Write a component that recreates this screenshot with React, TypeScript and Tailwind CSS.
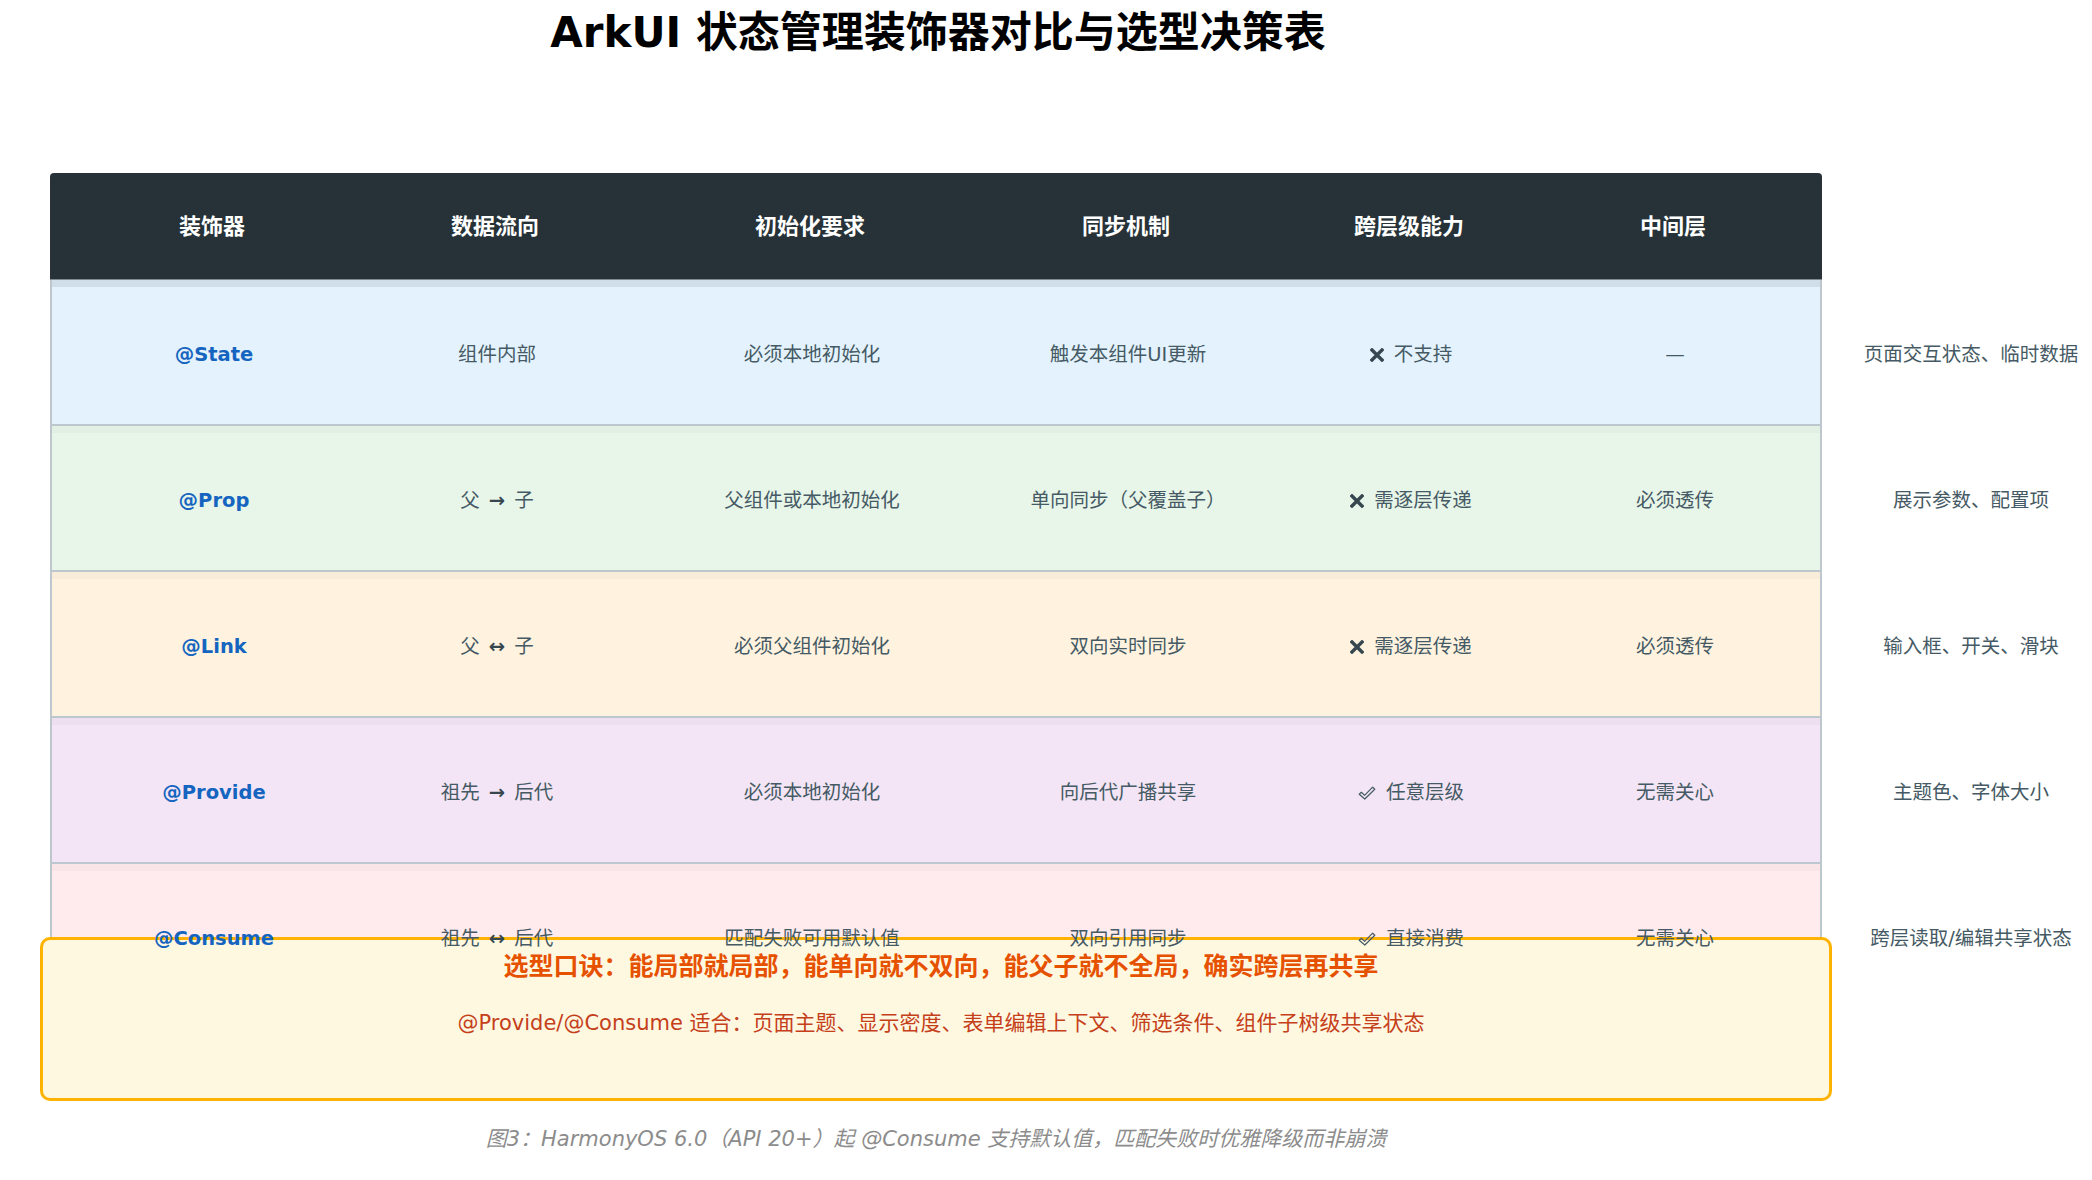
const cols = 'grid grid-cols-[324px_242px_388px_244px_322px_206px_46px_294px]'

const XMark = () => (
  <svg width="14" height="14" viewBox="0 0 14 14" className="shrink-0">
    <path d="M2 2 L12 12 M12 2 L2 12" stroke="#37474f" strokeWidth="3.4" strokeLinecap="square" />
  </svg>
)

const CheckMark = () => (
  <svg width="18" height="14" viewBox="0 0 18 14" className="shrink-0">
    <path
      d="M1.2 8.2 L3.4 6.3 L6.6 9.4 L14.6 1.2 L16.8 3.2 L6.8 13 Z"
      fill="none"
      stroke="#455a64"
      strokeWidth="1.2"
      strokeLinejoin="round"
    />
  </svg>
)

type Row = {
  name: string
  flow: string
  arrow?: string
  flowEnd?: string
  init: string
  sync: string
  ok: boolean
  reach: string
  middle: string
  use: string
  bg: string
  band: string
}

const rows: Row[] = [
  {
    name: '@State',
    flow: '组件内部',
    init: '必须本地初始化',
    sync: '触发本组件UI更新',
    ok: false,
    reach: '不支持',
    middle: '—',
    use: '页面交互状态、临时数据',
    bg: 'bg-[#e3f2fd]',
    band: 'shadow-[inset_0_7px_0_rgba(38,50,56,0.1)]',
  },
  {
    name: '@Prop',
    flow: '父',
    arrow: '→',
    flowEnd: '子',
    init: '父组件或本地初始化',
    sync: '单向同步（父覆盖子）',
    ok: false,
    reach: '需逐层传递',
    middle: '必须透传',
    use: '展示参数、配置项',
    bg: 'bg-[#e8f5e9]',
    band: 'shadow-[inset_0_7px_0_rgba(0,0,0,0.025)]',
  },
  {
    name: '@Link',
    flow: '父',
    arrow: '↔',
    flowEnd: '子',
    init: '必须父组件初始化',
    sync: '双向实时同步',
    ok: false,
    reach: '需逐层传递',
    middle: '必须透传',
    use: '输入框、开关、滑块',
    bg: 'bg-[#fff3e0]',
    band: 'shadow-[inset_0_7px_0_rgba(0,0,0,0.025)]',
  },
  {
    name: '@Provide',
    flow: '祖先',
    arrow: '→',
    flowEnd: '后代',
    init: '必须本地初始化',
    sync: '向后代广播共享',
    ok: true,
    reach: '任意层级',
    middle: '无需关心',
    use: '主题色、字体大小',
    bg: 'bg-[#f3e5f5]',
    band: 'shadow-[inset_0_7px_0_rgba(0,0,0,0.025)]',
  },
  {
    name: '@Consume',
    flow: '祖先',
    arrow: '↔',
    flowEnd: '后代',
    init: '匹配失败可用默认值',
    sync: '双向引用同步',
    ok: true,
    reach: '直接消费',
    middle: '无需关心',
    use: '跨层读取/编辑共享状态',
    bg: 'bg-[#ffebee]',
    band: 'shadow-[inset_0_7px_0_rgba(0,0,0,0.025)]',
  },
]

const headers = ['装饰器', '数据流向', '初始化要求', '同步机制', '跨层级能力', '中间层']

export default function App() {
  return (
    <div className="w-[2092px] h-[1180px] overflow-hidden bg-white font-['DejaVu_Sans','Noto_Sans_CJK_SC',sans-serif]">
      <h1 className="w-[1876px] pt-[8px] text-center text-[42px] leading-[50px] font-bold text-black">
        ArkUI 状态管理装饰器对比与选型决策表
      </h1>

      <div className="mt-[115px] ml-[50px]">
        <div className={`${cols} w-[1772px] h-[107px] items-center rounded-t-[4px] bg-[#263238] border-b border-[#7d8a92] text-white text-[22px] font-bold`}>
          {headers.map(h => (
            <div key={h} className="text-center">{h}</div>
          ))}
        </div>

        {/* rows: the last track sits outside the table background */}
        {rows.map(r => (
          <div
            key={r.name}
            className={`${cols} ${r.bg} ${r.band} w-[1772px] h-[146px] pt-[6px] items-center border-x-2 border-b-2 border-[#bcc7ce] text-[19.5px] text-[#455a64]`}
          >
            <div className="text-center font-bold text-[#1565c0]">{r.name}</div>
            <div className="flex items-center justify-center gap-[9px]">
              <span>{r.flow}</span>
              {r.arrow && <span className="font-bold text-[#37474f]">{r.arrow}</span>}
              {r.flowEnd && <span>{r.flowEnd}</span>}
            </div>
            <div className="text-center">{r.init}</div>
            <div className="text-center">{r.sync}</div>
            <div className="flex items-center justify-center gap-[10px]">
              {r.ok ? <CheckMark /> : <XMark />}
              <span>{r.reach}</span>
            </div>
            <div className="text-center">{r.middle}</div>
            <div></div>
            <div className="text-center whitespace-nowrap">{r.use}</div>
          </div>
        ))}
      </div>

      <div className="mt-[-73px] ml-[40px] w-[1792px] h-[164px] rounded-[10px] border-[3px] border-[#ffb300] bg-[#fff8e1] flex flex-col items-center pt-[11px]">
        <div className="pl-[10px] text-[25px] leading-[32px] font-bold text-[#e65100]">
          选型口诀：能局部就局部，能单向就不双向，能父子就不全局，确实跨层再共享
        </div>
        <div className="mt-[26px] pl-[10px] text-[21px] leading-[28px] text-[#c5401a]">
          @Provide/@Consume 适合：页面主题、显示密度、表单编辑上下文、筛选条件、组件子树级共享状态
        </div>
      </div>

      <p className="mt-[24px] w-[1872px] text-center text-[21px] leading-[28px] italic text-[#8c8c8c]">
        图3：HarmonyOS 6.0（API 20+）起 @Consume 支持默认值，匹配失败时优雅降级而非崩溃
      </p>
    </div>
  )
}
